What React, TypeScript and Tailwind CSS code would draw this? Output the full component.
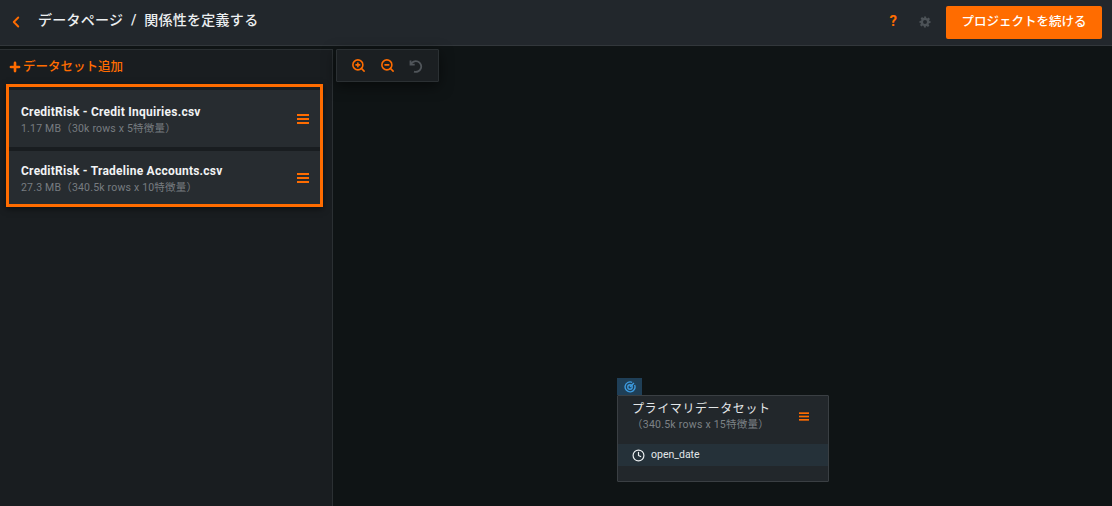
import { ChevronLeft, Plus, ZoomIn, ZoomOut, Clock } from 'lucide-react';

const FONT = "font-['Roboto','Noto_Sans_CJK_JP',sans-serif]";

const datasets = [
  { name: 'CreditRisk - Credit Inquiries.csv', meta: '1.17 MB（30k rows x 5特徴量）', row: 'h-[57px]' },
  { name: 'CreditRisk - Tradeline Accounts.csv', meta: '27.3 MB（340.5k rows x 10特徴量）', row: 'h-[53px]' },
];

const MenuIcon = ({ className }: { className?: string }) => (
  <svg viewBox="0 0 12 10" className={className} fill="#ff6c00">
    <rect x="0" y="0" width="12" height="2" />
    <rect x="0" y="4" width="12" height="2" />
    <rect x="0" y="8" width="12" height="2" />
  </svg>
);

const TargetIcon = () => (
  <svg viewBox="0 0 14 14" className="w-[12px] h-[12px]" fill="none" stroke="#3d9be0" strokeWidth="1.6">
    <path d="M9.5 1.6A5.8 5.8 0 1 0 12.4 4.6" />
    <circle cx="7" cy="7" r="2.6" />
    <path d="M7 7l4.6-4.6" />
  </svg>
);

const UndoIcon = () => (
  <svg viewBox="0 0 14 14" className="w-[14px] h-[14px]" fill="none" stroke="#50555a" strokeWidth="1.8">
    <path d="M1.5 1.5v4.2h4.2" />
    <path d="M1.8 5.5A5.4 5.4 0 1 1 5 12.6" />
  </svg>
);

const GearIcon = () => (
  <svg viewBox="0 0 24 24" className="w-[12px] h-[12px]" fill="#4c5257">
    <path
      fillRule="evenodd"
      d="M10 1h4l.6 3.2 1.9.8 2.7-1.8 2.8 2.8-1.8 2.7.8 1.9L23 10v4l-3.2.6-.8 1.9 1.8 2.7-2.8 2.8-2.7-1.8-1.9.8L14 23h-4l-.6-3.2-1.9-.8-2.7 1.8-2.8-2.8 1.8-2.7-.8-1.9L1 14v-4l3.2-.6.8-1.9-1.8-2.7 2.8-2.8 2.7 1.8 1.9-.8L10 1Zm2 7a4 4 0 1 0 0 8 4 4 0 0 0 0-8Z"
    />
  </svg>
);

export default function App() {
  return (
    <div className={`${FONT} w-[1112px] h-[506px] flex flex-col overflow-hidden bg-[#0f1415]`}>
      <header className="h-[46px] shrink-0 flex items-center bg-[#22272c] border-b border-[#32373b]">
        <ChevronLeft className="w-[18px] h-[18px] ml-[7px] mb-[2px] text-[#ff6c00]" strokeWidth={2.5} />
        <h1 className="ml-[13px] mb-[4px] text-[14px] font-medium text-[#eceff1] tracking-[0.28px] whitespace-nowrap">
          データページ&nbsp;&nbsp;/&nbsp;&nbsp;関係性を定義する
        </h1>
        <div className="ml-auto flex items-center">
          <span className="text-[15px] font-bold text-[#ff6c00] mb-[2px]">?</span>
          <span className="ml-[22px] mb-[1px]">
            <GearIcon />
          </span>
          <button className="ml-[15px] mr-[10px] mb-[1px] w-[156px] h-[33px] rounded-[2px] bg-[#ff6c00] text-[12.5px] font-medium text-white whitespace-nowrap">
            プロジェクトを続ける
          </button>
        </div>
      </header>

      <div className="relative flex-1 flex min-h-0 pt-[3px]">
        <aside className="w-[333px] shrink-0 bg-[#191d20] border-t border-r border-[#2b3033]">
          <div className="h-[34px] flex items-center pl-[8px] text-[#ff6c00]">
            <Plus className="w-[14px] h-[14px]" strokeWidth={4.5} />
            <span className="ml-[1px] text-[12.5px] font-medium whitespace-nowrap">データセット追加</span>
          </div>
          <div className="mx-[6px] w-[317px] border-[3px] border-[#ff6c00] flex flex-col gap-[4px] pt-[3px] shadow-[0_2px_6px_rgba(0,0,0,0.5)]">
            {datasets.map((d) => (
              <div key={d.name} className={`${d.row} flex items-center justify-between pl-[12px] pr-[11px] bg-[#272c30]`}>
                <div className="flex flex-col pt-[2px]">
                  <span className="text-[12px] leading-[18px] font-bold text-[#f1f3f4] tracking-[0.25px] whitespace-nowrap">{d.name}</span>
                  <span className="text-[10.5px] leading-[16px] text-[#777c80] tracking-[0.2px] whitespace-nowrap">{d.meta}</span>
                </div>
                <MenuIcon className="w-[12px] h-[10px]" />
              </div>
            ))}
          </div>
        </aside>

        <main className="flex-1 bg-[#0f1415]" />

        <div className="absolute left-[336px] top-[3px] w-[103px] h-[33px] flex items-center gap-[14px] pl-[14px] bg-[#1b1f22] border border-[#2b3033] rounded-[1px] shadow-[0_4px_14px_rgba(0,0,0,0.5)]">
          <ZoomIn className="w-[15px] h-[15px] text-[#ff6c00]" strokeWidth={2.5} />
          <ZoomOut className="w-[15px] h-[15px] text-[#ff6c00]" strokeWidth={2.5} />
          <UndoIcon />
        </div>

        <div className="absolute left-[617px] top-[332px] w-[212px]">
          <div className="w-[25px] h-[17px] flex items-center justify-center bg-[#1f3f57]">
            <TargetIcon />
          </div>
          <div className="h-[87px] flex flex-col bg-[#22272b] border border-[#3a3f43] rounded-[1px]">
            <div className="h-[48px] relative pl-[14px] pt-[4px]">
              <div className="text-[12px] leading-[18px] text-[#e3e6e8] tracking-[0.6px] whitespace-nowrap">プライマリデータセット</div>
              <div className="text-[10.5px] leading-[14px] text-[#7d8286] tracking-[0.25px] whitespace-nowrap">（340.5k rows x 15特徴量）</div>
              <MenuIcon className="absolute right-[19px] top-[16px] w-[10px] h-[9px]" />
            </div>
            <div className="h-[22px] flex items-center pl-[14px] bg-[#253139]">
              <Clock className="w-[13px] h-[13px] text-[#eceff1]" strokeWidth={2.2} />
              <span className="ml-[6px] text-[10.5px] text-[#e3e6e8] whitespace-nowrap">open_date</span>
            </div>
          </div>
        </div>
      </div>
    </div>
  );
}
